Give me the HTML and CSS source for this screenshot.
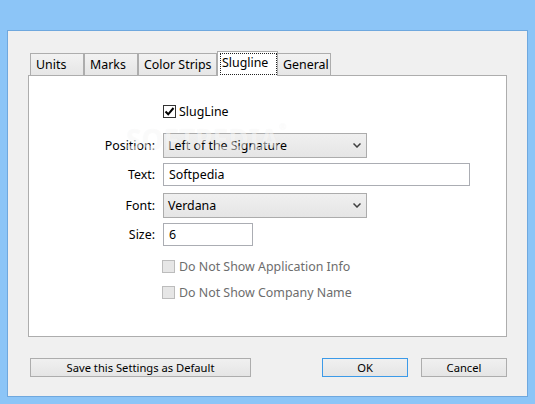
FILE: index.html
```html
<!DOCTYPE html>
<html>
<head>
<meta charset="utf-8">
<link rel="stylesheet" href="styles.css">
</head>
<body>
<div class="dialog">
  <div class="tabs">
    <div class="tab w-units">Units</div>
    <div class="tab w-marks">Marks</div>
    <div class="tab w-strips">Color Strips</div>
    <div class="tab sel w-slug">Slugline</div>
    <div class="tab w-general">General</div>
  </div>
  <div class="panel">
    <span class="watermark">SOFTPEDIA<sup>®</sup></span>
    <div class="check-row on">
      <span class="box checked"><svg width="11" height="11" viewBox="0 0 11 11"><path d="M1.5 5.5 L4.2 8.3 L9.5 2" fill="none" stroke="#000" stroke-width="2"/></svg></span>
      <span class="check-label">SlugLine</span>
    </div>
    <div class="form-row r-pos">
      <span class="label">Position:</span>
      <div class="select s-wide"><span>Left of the Signature</span><svg class="chev" width="8" height="5" viewBox="0 0 8 5"><path d="M0.5 0.5 L4 4 L7.5 0.5" fill="none" stroke="#404040" stroke-width="1.5"/></svg></div>
    </div>
    <div class="form-row r-text">
      <span class="label">Text:</span>
      <div class="input i-wide">Softpedia</div>
    </div>
    <div class="form-row r-font">
      <span class="label">Font:</span>
      <div class="select s-wide"><span>Verdana</span><svg class="chev" width="8" height="5" viewBox="0 0 8 5"><path d="M0.5 0.5 L4 4 L7.5 0.5" fill="none" stroke="#404040" stroke-width="1.5"/></svg></div>
    </div>
    <div class="form-row r-size">
      <span class="label">Size:</span>
      <div class="input i-size">6</div>
    </div>
    <div class="check-row dis r-d1">
      <span class="box disabled"></span>
      <span class="check-label">Do Not Show Application Info</span>
    </div>
    <div class="check-row dis r-d2">
      <span class="box disabled"></span>
      <span class="check-label">Do Not Show Company Name</span>
    </div>
  </div>
  <div class="buttons">
    <div class="btn b-save">Save this Settings as Default</div>
    <div class="spacer"></div>
    <div class="btn default b-ok">OK</div>
    <div class="btn b-cancel">Cancel</div>
  </div>
</div>
</body>
</html>
```
FILE: styles.css
```css
html, body {
  margin: 0;
  height: 100%;
}
body {
  background: #8cc5f7;
  padding: 30px 7px 7px 7px;
  box-sizing: border-box;
  height: 404px;
  font-family: "Noto Sans", "Open Sans", sans-serif;
  font-size: 12.4px;
  color: #000;
}
.dialog {
  height: 100%;
  box-sizing: border-box;
  border: 1px solid #6fa8de;
  background: #f0f0f0;
  padding: 20px 20px 0 20px;
  display: flex;
  flex-direction: column;
}
.tabs {
  display: flex;
  align-items: flex-end;
  height: 24px;
  padding-left: 2px;
}
.tab {
  box-sizing: border-box;
  height: 22px;
  border: 1px solid #adadad;
  border-bottom: none;
  background: linear-gradient(#f2f2f2, #e6e6e6);
  text-align: left;
  padding-left: 5px;
  line-height: 20px;
  padding-top: 1px;
  white-space: nowrap;
}
.w-units { width: 54px; }
.w-marks { width: 54px; }
.w-strips { width: 79px; }
.w-slug { width: 61px; }
.w-general { width: 54px; margin-left: -1px; }
.tab.sel {
  height: 25px;
  margin-bottom: -1px;
  background: #fff;
  position: relative;
  z-index: 1;
  line-height: 21px;
  padding-top: 0;
  padding-left: 4px;
}
.tab.sel::after {
  content: "";
  position: absolute;
  top: 1px;
  left: 2px;
  right: 0;
  bottom: 1px;
  border: 1px dotted #222;
}
.panel {
  position: relative;
  box-sizing: border-box;
  height: 262px;
  border: 1px solid #adadad;
  background: #fff;
  padding-top: 27px;
  display: flex;
  flex-direction: column;
}
.watermark {
  position: absolute;
  left: 97px;
  top: 44px;
  font-size: 28px;
  font-weight: bold;
  color: rgba(255, 255, 255, 0.5);
  text-shadow: 0 0 1px rgba(0, 0, 0, 0.04);
  z-index: 2;
  pointer-events: none;
}
.watermark sup { font-size: 9px; vertical-align: top; }
.check-row {
  display: flex;
  align-items: center;
  height: 16px;
}
.check-row.on { padding-left: 134px; }
.check-row.dis { padding-left: 133px; color: #6d6d6d; }
.box {
  box-sizing: border-box;
  width: 13px;
  height: 13px;
  display: flex;
  align-items: center;
  justify-content: center;
}
.box.checked { border: 1px solid #333; background: #fff; }
.box.disabled { border: 1px solid #bcbcbc; background: #e6e6e6; }
.on .check-label { margin-left: 3px; }
.dis .check-label { margin-left: 4px; }
.form-row {
  display: grid;
  grid-template-columns: 126px auto;
  column-gap: 8px;
  align-items: center;
  justify-items: start;
}
.label { justify-self: end; }
.r-pos { margin-top: 14px; }
.r-text { margin-top: 5px; }
.r-font { margin-top: 7px; }
.r-size { margin-top: 5px; }
.r-d1 { margin-top: 12px; }
.r-d2 { margin-top: 10px; }
.select {
  box-sizing: border-box;
  height: 25px;
  border: 1px solid #acacac;
  background: linear-gradient(#f0f0f0, #e5e5e5);
  display: flex;
  align-items: center;
  padding-left: 4px;
  padding-right: 5px;
}
.select span { flex: 1; }
.s-wide { width: 204px; }
.input {
  box-sizing: border-box;
  height: 23px;
  border: 1px solid #abadb3;
  background: #fff;
  display: flex;
  align-items: center;
  padding-left: 5px;
}
.i-wide { width: 307px; }
.i-size { width: 90px; }
.buttons {
  display: flex;
  margin-top: 21px;
  font-size: 11.2px;
}
.spacer { flex: 1; }
.btn {
  box-sizing: border-box;
  height: 19px;
  border: 1px solid #adadad;
  background: linear-gradient(#f0f0f0, #e5e5e5);
  display: flex;
  align-items: center;
  justify-content: center;
}
.btn.default { border-color: #3c9ae8; }
.b-save { width: 221px; margin-left: 2px; }
.b-ok { width: 86px; }
.b-cancel { width: 86px; margin-left: 13px; }
```
